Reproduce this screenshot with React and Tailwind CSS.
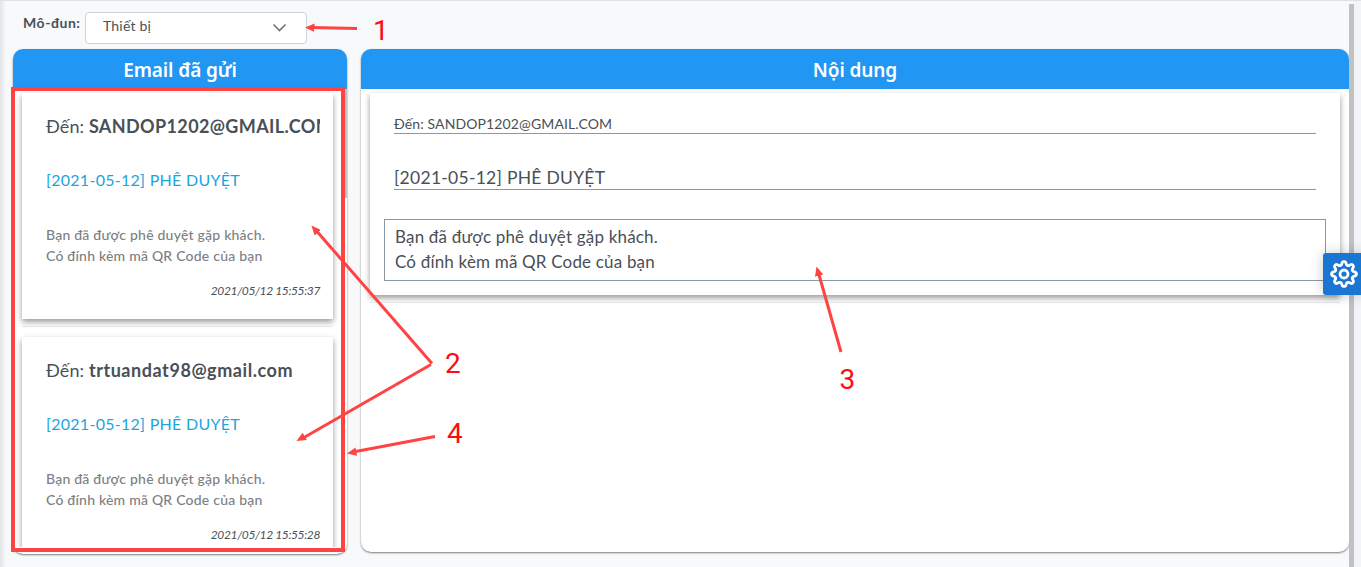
import React from 'react';

const emails = [
  { id: 1, to: 'SANDOP1202@GMAIL.COM', time: '2021/05/12 15:55:37', tracking: 'tracking-[0.38px]' },
  { id: 2, to: 'trtuandat98@gmail.com', time: '2021/05/12 15:55:28', tracking: 'tracking-[0.56px]' },
];

const SUBJECT = '[2021-05-12] PHÊ DUYỆT';
const LINES = ['Bạn đã được phê duyệt gặp khách.', 'Có đính kèm mã QR Code của bạn'];

const gearPath =
  Array.from({ length: 96 }, (_, i) => {
    const a = (i / 96) * Math.PI * 2;
    const r = 10.8 + 1.8 * Math.tanh(1.5 * Math.cos(8 * a));
    return `${i ? 'L' : 'M'}${(14 + r * Math.cos(a)).toFixed(2)} ${(14 + r * Math.sin(a)).toFixed(2)}`;
  }).join('') + 'Z';

function Gear() {
  return (
    <svg width="28" height="28" viewBox="0 0 28 28" fill="none" stroke="#fff" strokeWidth="2.8" strokeLinejoin="round">
      <path d={gearPath} />
      <circle cx="14" cy="14" r="4" />
    </svg>
  );
}

function EmailCard({ email }) {
  return (
    <article className="h-[226px] shrink-0 bg-white px-6 pt-[19px] shadow-[0_3px_6px_rgba(0,0,0,0.4)]">
      <div className="-mr-[11px] w-[274px] overflow-hidden whitespace-nowrap text-[18px] leading-[29px] tracking-[0.1px]">
        Đến: <b className={`font-bold ${email.tracking}`}>{email.to}</b>
      </div>
      <div className="mt-[27px] whitespace-nowrap text-[16px] leading-[24px] tracking-[0.28px] text-[#1ca5dc]">{SUBJECT}</div>
      <div className="mt-[32px] whitespace-nowrap text-[14px] font-medium leading-[21px] tracking-[0.22px] text-[#7c7f84]">
        {LINES.map((l) => <div key={l}><span>{l}</span></div>)}
      </div>
      <div className="-mr-[11px] mt-[16px] whitespace-nowrap text-right text-[12px] italic leading-[18px] tracking-[-0.37px]">{email.time}</div>
    </article>
  );
}

function PanelHeader({ children }) {
  return (
    <h2 className="flex h-10 shrink-0 items-center justify-center rounded-t-[10px] bg-[#2196f3] pt-[2px] font-['Noto_Sans','Open_Sans',sans-serif] text-[19px] font-semibold tracking-[-0.1px] text-white">
      {children}
    </h2>
  );
}

function Annotations() {
  return (
    <svg className="pointer-events-none absolute inset-0" width="1361" height="567" viewBox="0 0 1361 567" fill="none">
      <defs>
        <marker id="head" viewBox="0 0 9 8" refX="9" refY="4" markerWidth="9.5" markerHeight="8.8" markerUnits="userSpaceOnUse" orient="auto">
          <path d="M0 0L9 4L0 8Z" fill="#ff4343" />
        </marker>
      </defs>
      <rect x="13" y="89" width="330" height="461" stroke="#ff4343" strokeWidth="4" />
      <g stroke="#ff4343" strokeWidth="3">
        <path d="M357 28.5L312 27.6" />
        <path d="M432 363.5L317 231.5" />
        <path d="M431 364.5L304 437.5" />
        <path d="M435 436.5L353 452" />
        <path d="M841 352L818.5 273" />
      </g>
      <g stroke="transparent">
        <path d="M357 28.5L305 27.5" markerEnd="url(#head)" />
        <path d="M431 363L311.5 225.5" markerEnd="url(#head)" />
        <path d="M431 365L296.5 441" markerEnd="url(#head)" />
        <path d="M435 436.5L347 453.5" markerEnd="url(#head)" />
        <path d="M841 352L816.5 266.5" markerEnd="url(#head)" />
      </g>
      <g fill="#fb0d12" fontFamily="Roboto, Liberation Sans, sans-serif" fontSize="28">
        <text x="373" y="40">1</text>
        <text x="445" y="373">2</text>
        <text x="839.5" y="389">3</text>
        <text x="447" y="443">4</text>
      </g>
    </svg>
  );
}

export default function App() {
  return (
    <div className="relative flex h-[567px] w-[1361px] overflow-hidden border-t border-[#dee2e6] bg-[#f8f9fb] font-['Lato','Noto_Sans',sans-serif] text-[#495057]">
      <div className="w-[6px] shrink-0 bg-linear-to-r from-[#e3e4e8] to-[#f8f9fb]" />
      <main className="flex min-w-0 flex-1 flex-col pl-[7px]">
        <div className="flex h-12 shrink-0 pl-[10px] pt-[11px]">
          <label className="w-[62px] whitespace-nowrap text-[14px] font-bold leading-[22px] tracking-[0.55px]"><span>Mô-đun:</span></label>
          <div className="flex h-8 w-[222px] justify-between rounded-[4px] border border-[#ced4da] bg-white pl-[17px] pr-[19px]">
            <span className="text-[14px] leading-[26px] tracking-[0.2px]">Thiết bị</span>
            <svg className="mt-[10px]" width="15" height="10" viewBox="0 0 15 10" fill="none" stroke="#6c757d" strokeWidth="1.6">
              <path d="M1.5 1.5L7.5 7.5L13.5 1.5" />
            </svg>
          </div>
        </div>
        <div className="flex gap-[14px]">
          <section className="flex h-[505px] w-[334px] flex-col rounded-[10px] bg-white shadow-[0_1px_2px_rgba(0,0,0,0.5)]">
            <PanelHeader>Email đã gửi</PanelHeader>
            <div className="flex h-[458px] shrink-0">
              <div className="flex w-[329px] flex-col overflow-hidden pl-[9px] pr-[9px] pt-1">
                <EmailCard email={emails[0]} />
                <hr className="mb-[10px] mt-[7px] shrink-0 border-[#e4e6e9]" />
                <EmailCard email={emails[1]} />
              </div>
              <div className="h-[109px] w-[5px] bg-[#c1c1c1]" />
            </div>
          </section>
          <section className="flex h-[503px] w-[988px] flex-col rounded-[10px] bg-white shadow-[0_1px_2px_rgba(0,0,0,0.5)]">
            <PanelHeader>Nội dung</PanelHeader>
            <div className="flex flex-col px-[9px] pt-1">
              <article className="flex h-[202px] flex-col px-[14px] pt-[20px] shadow-[0_3px_6px_rgba(0,0,0,0.4)]">
                <div className="mx-[10px] h-[21px] border-b border-[#8b98a3] text-[14px] leading-[21px] tracking-[0.12px]"><span>Đến: {emails[0].to}</span></div>
                <div className="mx-[10px] mt-[29px] h-[27px] border-b border-[#8b98a3] text-[17.5px] leading-[30px] tracking-[0.27px]"><span>{SUBJECT}</span></div>
                <div className="mt-[29px] h-[62px] border border-[#8b98a3] px-[10px] pt-[4px] text-[17px] leading-[25px] tracking-[0.18px]">
                  {LINES.map((l) => <div key={l}><span>{l}</span></div>)}
                </div>
              </article>
              <hr className="mt-[7px] border-[#e4e6e9]" />
            </div>
          </section>
        </div>
      </main>
      <div className="mt-[3px] w-[5px] shrink-0 bg-[#c1c1c1]" />
      <div className="w-[7px] shrink-0 bg-[#f3f4f7]" />
      <button aria-label="Cấu hình" className="absolute left-[1323px] top-[252px] flex h-[42px] w-[42px] items-center rounded-l-[3px] bg-[#1976d2] pl-[7px] shadow-[0_0_14px_rgba(0,0,0,0.2)]">
        <Gear />
      </button>
      <div className="absolute -top-px left-0">
        <Annotations />
      </div>
    </div>
  );
}
